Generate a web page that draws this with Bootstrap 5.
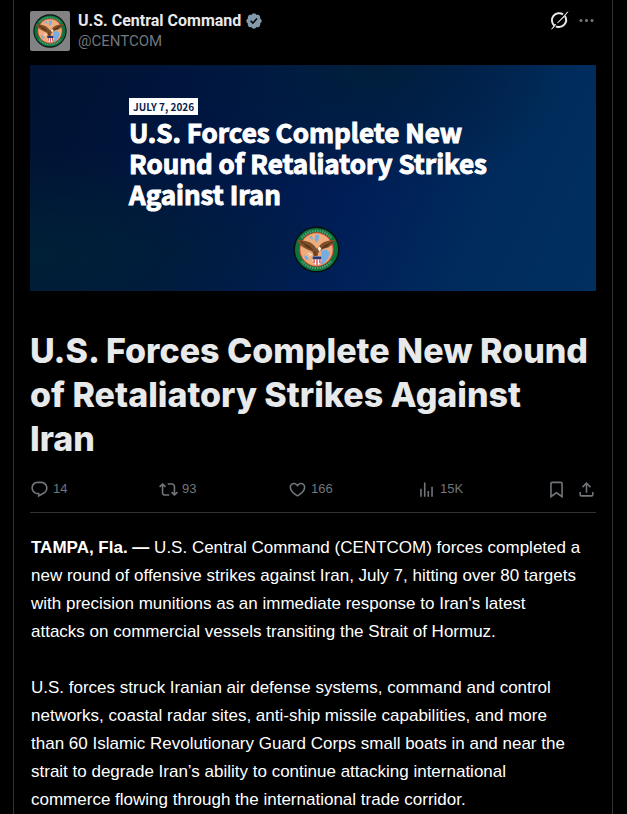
<!DOCTYPE html>
<html lang="en" data-bs-theme="dark">
<head>
<meta charset="utf-8">
<meta name="viewport" content="width=device-width, initial-scale=1">
<title>U.S. Central Command</title>
<link href="https://cdn.jsdelivr.net/npm/bootstrap@5.3.0/dist/css/bootstrap.min.css" rel="stylesheet">
<style>
body { background: #000; color: #fff; font-family: Inter, "Liberation Sans", sans-serif; overflow-x: hidden; }
.feed { max-width: 600px; border: solid #2f3336; border-width: 0 1px; padding: 11px 16px 0; margin: 0 14px 0 13px; min-height: 100vh; }
.avatar { width: 40px; height: 40px; background: #828285; border-radius: 2px; }
.avatar svg { width: 34px; height: 34px; }
.author { font-size: 16px; line-height: 20px; color: #e7e9ea; text-decoration: none; }
.author-name { font-family: Roboto, sans-serif; font-weight: 700; }
.handle { font-family: Roboto, sans-serif; font-size: 15px; line-height: 20px; color: #71767b; text-decoration: none; }
.verified { width: 18px; height: 18px; fill: #829aab; }
.tool { background: none; border: 0; padding: 0; color: #71767b; font-family: "Liberation Sans", Arial, sans-serif; font-size: 13px; line-height: 20px; }
.tool svg { width: 19px; height: 19px; fill: currentColor; flex: none; }
.tool.bright { color: #e7e9ea; }
.save-share { gap: 11px; }
.banner { margin-top: 14px; padding: 33px 93px 18px 99px; min-height: 226px; font-family: "Noto Sans CJK SC", "Noto Sans", sans-serif; font-weight: 700;
  background:
    radial-gradient(ellipse at 0% 85%, rgba(0,34,54,.9), transparent 40%),
    radial-gradient(ellipse at 62% 0%, rgba(0,31,52,.8), transparent 40%),
    linear-gradient(115deg, #001230 0%, #001642 32%, #001e58 58%, #002b5c 78%, #003060 100%); }
.datetag { background: #fff; color: #0b1d4d; font-size: 10px; line-height: 17px; padding: 0 4px; }
.banner-title { font-size: 26px; line-height: 31px; font-weight: 700; margin: 1px 0 0; -webkit-text-stroke: 1px #fff; }
.seal { width: 47px; height: 47px; }
.headline { font-size: 34px; line-height: 44px; font-weight: 800; color: #e7e9ea; margin: 38px 0 0; }
.stats { margin-top: 18px; padding-bottom: 13px; border-bottom: 1px solid #2f3336; }
.stats .metric { flex: 0 0 129px; }
.story { font-family: "Liberation Sans", Arial, sans-serif; font-size: 17px; line-height: 28px; padding: 21px 0 0 1px; }
.story p { margin-bottom: 28px; }
</style>
</head>
<body>
<svg class="d-none" aria-hidden="true">
  <symbol id="seal" viewBox="0 0 48 48">
    <circle cx="24" cy="24" r="23.5" fill="#07100f"/>
    <circle cx="24" cy="24" r="22" fill="#0b743c"/>
    <circle cx="24" cy="24" r="17.5" fill="#d9432c"/>
    <circle cx="24" cy="24" r="16.500" fill="#f0ad7c"/>
    <path d="M16 12l3-2 2 4zM23 9h4l-1 5-2 3-2-3zM29 25l5-1 4 3-2 6-5 6-3 0 1-7zM11 30l4 1 1 3-3 1z" fill="#76aee0"/>
    <path d="M4 14l8 1c5 1 9 3 12 8l2-1c2-4 5-6 10-7l7-1c-1 4-4 6-7 8-4 1-8 2-10 5l-1 4h-4c0-3-1-5-4-6-5-2-11-5-13-11z" fill="#80502a"/>
    <path d="M8 16l10 6M12 20l8 4M41 16l-10 5M36 20l-7 3M22 26l1 4" stroke="#4b2b17" fill="none"/>
    <path d="M25 23l2-2 2 2-2 3z" fill="#fff3df"/>
    <path d="M15 28l4 1-3 2" fill="none" stroke="#eee"/>
    <path d="M20 31h9v4c0 3-2 4-4.500 5-2.500-1-4.500-2-4.500-5z" fill="#fff"/>
    <path d="M20 31h9v3h-9z" fill="#263b72"/>
    <path d="M21.500 34v4M24.500 34v6M27.500 34v4" stroke="#d03442" stroke-width="1.300"/>
    <path d="M9 12A19.500 19.500 0 0 1 39 12M9 36A19.500 19.500 0 0 0 39 36" fill="none" stroke="#9fc6a9" stroke-width="2.500" stroke-dasharray="1.500 1" opacity=".5"/>
  </symbol>
</svg>
<main class="feed">
  <header class="d-flex align-items-start">
    <a href="#" class="avatar d-flex align-items-center justify-content-center" aria-label="CENTCOM profile"><svg><use href="#seal"/></svg></a>
    <div class="d-flex flex-column ms-2">
      <a href="#" class="author d-flex align-items-center"><span class="author-name">U.S. Central Command</span>
        <svg class="verified ms-1" viewBox="0 0 22 22"><path d="M20.396 11c-.018-.646-.215-1.275-.57-1.816-.354-.54-.852-.972-1.438-1.246.223-.607.27-1.264.14-1.897-.131-.634-.437-1.218-.882-1.687-.47-.445-1.053-.75-1.687-.882-.633-.13-1.29-.083-1.897.14-.273-.587-.704-1.086-1.245-1.44S11.647 1.62 11 1.604c-.646.017-1.273.213-1.813.568s-.969.854-1.24 1.44c-.608-.223-1.267-.272-1.902-.14-.635.13-1.22.436-1.69.882-.445.47-.749 1.055-.878 1.688-.13.633-.08 1.29.144 1.896-.587.274-1.087.705-1.443 1.245-.356.54-.555 1.17-.574 1.817.02.647.218 1.276.574 1.817.356.54.856.972 1.443 1.245-.224.606-.274 1.263-.144 1.896.13.634.433 1.218.877 1.688.47.443 1.054.747 1.687.878.633.132 1.29.084 1.897-.136.274.586.705 1.084 1.246 1.439.54.354 1.17.551 1.816.569.647-.016 1.276-.213 1.817-.567s.972-.854 1.245-1.44c.604.239 1.266.296 1.903.164.636-.132 1.22-.447 1.68-.907.46-.46.776-1.044.908-1.681s.075-1.299-.165-1.903c.586-.274 1.084-.705 1.439-1.246.354-.54.551-1.17.569-1.816zM9.662 14.85l-3.429-3.428 1.293-1.302 2.072 2.072 4.4-4.794 1.347 1.246z"/></svg></a>
      <a href="#" class="handle">@CENTCOM</a>
    </div>
    <div class="d-flex ms-auto gap-2">
      <button class="tool bright d-flex" type="button" aria-label="Explain"><svg viewBox="0 0 24 24"><path d="M5.500 18.500A9 9 0 0 1 16.500 4.300M19 6.500A9 9 0 0 1 7.500 19.300" fill="none" stroke="currentColor" stroke-width="2.500"/><path d="M2 23L7 16.500 6 19zM9.500 15L22.500 1 18 7.200z" stroke="currentColor" stroke-width="1"/></svg></button>
      <button class="tool d-flex" type="button" aria-label="More"><svg viewBox="0 0 24 24"><path d="M3 12c0-1.100.9-2 2-2s2 .9 2 2-.9 2-2 2-2-.9-2-2zm9 2c1.100 0 2-.9 2-2s-.9-2-2-2-2 .9-2 2 .9 2 2 2zm7 0c1.100 0 2-.9 2-2s-.9-2-2-2-2 .9-2 2 .9 2 2 2z"/></svg></button>
    </div>
  </header>
  <section class="banner d-flex flex-column align-items-start">
    <span class="datetag">JULY 7, 2026</span>
    <h2 class="banner-title">U.S. Forces Complete New<br>Round of Retaliatory Strikes<br>Against Iran</h2>
    <svg class="seal align-self-center mt-auto"><use href="#seal"/></svg>
  </section>
  <h1 class="headline">U.S. Forces Complete New Round of Retaliatory Strikes Against<br>Iran</h1>
  <div class="stats d-flex align-items-center">
    <div class="metric"><button class="tool d-flex align-items-center gap-1" type="button" aria-label="14 replies"><svg viewBox="0 0 24 24"><path d="M1.751 10c0-4.420 3.584-8 8.005-8h4.366c4.490 0 8.129 3.640 8.129 8.130 0 2.960-1.607 5.680-4.196 7.110l-8.054 4.460v-3.690h-.067c-4.490.1-8.183-3.510-8.183-8.010zm8.005-6c-3.317 0-6.005 2.690-6.005 6 0 3.370 2.770 6.080 6.138 6.010l.351-.01h1.761v2.300l5.087-2.810c1.951-1.080 3.163-3.130 3.163-5.360 0-3.390-2.744-6.130-6.129-6.130H9.756z"/></svg><span>14</span></button></div>
    <div class="metric"><button class="tool d-flex align-items-center gap-1" type="button" aria-label="93 reposts"><svg viewBox="0 0 24 24"><path d="M4.500 3.880l4.432 4.140-1.364 1.460L5.500 7.550V16c0 1.100.896 2 2 2H13v2H7.500c-2.209 0-4-1.790-4-4V7.550L1.432 9.480.068 8.020 4.500 3.880zM16.500 6H11V4h5.500c2.209 0 4 1.790 4 4v8.450l2.068-1.930 1.364 1.460-4.432 4.140-4.432-4.140 1.364-1.460 2.068 1.930V8c0-1.100-.896-2-2-2z"/></svg><span>93</span></button></div>
    <div class="metric"><button class="tool d-flex align-items-center gap-1" type="button" aria-label="166 likes"><svg viewBox="0 0 24 24"><path d="M16.697 5.500c-1.222-.06-2.679.51-3.890 2.160l-.805 1.090-.806-1.090C9.984 6.010 8.526 5.440 7.304 5.500c-1.243.07-2.349.78-2.910 1.910-.552 1.120-.633 2.780.479 4.820 1.074 1.970 3.257 4.270 7.129 6.610 3.870-2.340 6.052-4.640 7.126-6.610 1.111-2.040 1.030-3.700.477-4.820-.561-1.130-1.666-1.840-2.908-1.910zm4.187 7.690c-1.351 2.480-4.001 5.120-8.379 7.670l-.503.3-.504-.3c-4.379-2.550-7.029-5.190-8.382-7.670-1.360-2.500-1.410-4.860-.514-6.670.887-1.790 2.647-2.910 4.601-3.010 1.651-.09 3.368.56 4.798 2.010 1.429-1.450 3.146-2.100 4.796-2.010 1.954.1 3.714 1.220 4.601 3.010.896 1.810.846 4.170-.514 6.670z"/></svg><span>166</span></button></div>
    <button class="tool d-flex align-items-center gap-1" type="button" aria-label="15K views"><svg viewBox="0 0 24 24"><path d="M8.750 21V3h2v18h-2zM18 21V8.500h2V21h-2zM4 21l.004-10h2L6 21H4zm9.248 0v-7h2v7h-2z"/></svg><span>15K</span></button>
    <div class="save-share d-flex ms-auto">
      <button class="tool d-flex" type="button" aria-label="Bookmark"><svg viewBox="0 0 24 24"><path d="M4 4.500C4 3.120 5.119 2 6.500 2h11C18.881 2 20 3.120 20 4.500v18.440l-8-5.710-8 5.710V4.500zM6.500 4c-.276 0-.5.22-.5.5v14.560l6-4.290 6 4.290V4.500c0-.28-.224-.5-.5-.5h-11z"/></svg></button>
      <button class="tool d-flex" type="button" aria-label="Share"><svg viewBox="0 0 24 24"><path d="M12 2.590l5.700 5.700-1.410 1.420L13 6.410V16h-2V6.410l-3.300 3.300-1.410-1.420L12 2.590zM21 15l-.02 3.510c0 1.380-1.120 2.490-2.500 2.490H5.500C4.110 21 3 19.880 3 18.500V15h2v3.500c0 .28.22.5.5.5h12.980c.28 0 .5-.22.5-.5L19 15h2z"/></svg></button>
    </div>
  </div>
  <article class="story">
    <p><strong>TAMPA, Fla. —</strong> U.S. Central Command (CENTCOM) forces completed a<br>new round of offensive strikes against Iran, July 7, hitting over 80 targets<br>with precision munitions as an immediate response to Iran's latest<br>attacks on commercial vessels transiting the Strait of Hormuz.</p>
    <p class="mb-0">U.S. forces struck Iranian air defense systems, command and control<br>networks, coastal radar sites, anti-ship missile capabilities, and more<br>than 60 Islamic Revolutionary Guard Corps small boats in and near the<br>strait to degrade Iran’s ability to continue attacking international<br>commerce flowing through the international trade corridor.</p>
  </article>
</main>
<script src="https://cdn.jsdelivr.net/npm/bootstrap@5.3.0/dist/js/bootstrap.bundle.min.js"></script>
</body>
</html>
